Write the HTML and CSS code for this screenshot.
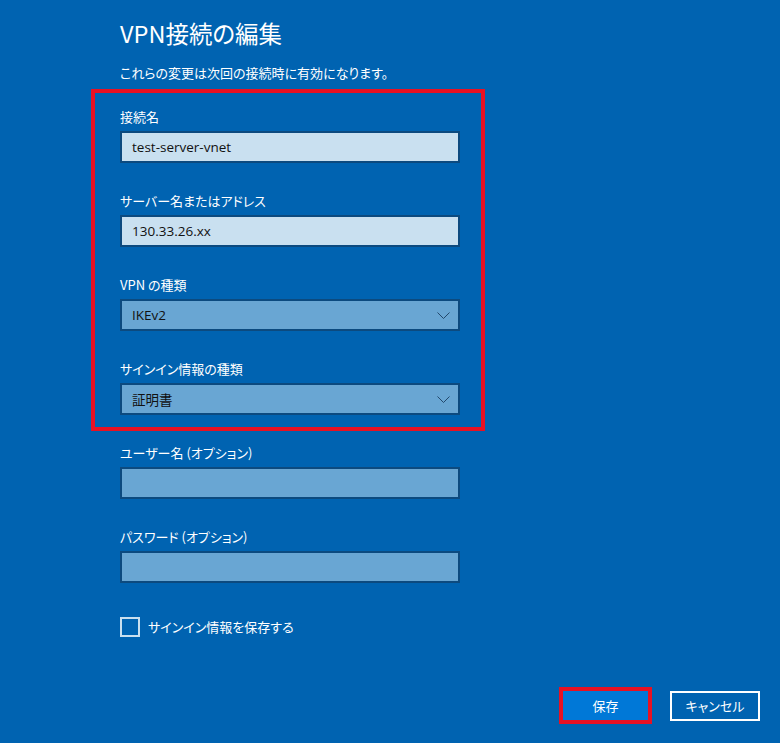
FILE: index.html
```html
<!DOCTYPE html>
<html lang="ja">
<head>
    <meta charset="UTF-8">
    <meta name="viewport" content="width=device-width, initial-scale=1.0">
    <title>VPN接続の編集</title>
    <link rel="stylesheet" href="styles.css">
</head>
<body>
    <div class="dialog">
        <!-- タイトル -->
        <h1 class="dialog-title">VPN接続の編集</h1>
        <p class="dialog-note">これらの変更は次回の接続時に有効になります。</p>

        <!-- 赤枠で囲まれた項目 -->
        <div class="highlight">
            <div class="field">
                <label class="field-label">接続名</label>
                <div class="field-box box-light">test-server-vnet</div>
            </div>
            <div class="field">
                <label class="field-label">サーバー名またはアドレス</label>
                <div class="field-box box-light">130.33.26.xx</div>
            </div>
            <div class="field">
                <label class="field-label">VPN の種類</label>
                <div class="field-box box-select">
                    <span>IKEv2</span>
                    <svg class="chevron" width="13" height="7" viewBox="0 0 13 7"><path d="M0.5 0.5 L6.5 6.5 L12.5 0.5" fill="none" stroke="#23486b" stroke-width="1"/></svg>
                </div>
            </div>
            <div class="field">
                <label class="field-label">サインイン情報の種類</label>
                <div class="field-box box-select">
                    <span>証明書</span>
                    <svg class="chevron" width="13" height="7" viewBox="0 0 13 7"><path d="M0.5 0.5 L6.5 6.5 L12.5 0.5" fill="none" stroke="#23486b" stroke-width="1"/></svg>
                </div>
            </div>
        </div>

        <!-- オプション項目 -->
        <div class="field">
            <label class="field-label">ユーザー名 (オプション)</label>
            <div class="field-box box-select"></div>
        </div>
        <div class="field">
            <label class="field-label">パスワード (オプション)</label>
            <div class="field-box box-select"></div>
        </div>

        <label class="check">
            <span class="check-box"></span>
            <span class="check-text">サインイン情報を保存する</span>
        </label>
    </div>

    <!-- ボタン -->
    <div class="buttons">
        <div class="save-mark">
            <button class="btn btn-primary">保存</button>
        </div>
        <button class="btn btn-outline">キャンセル</button>
    </div>
</body>
</html>
```

FILE: styles.css
```css
* {
    margin: 0;
    padding: 0;
    box-sizing: border-box;
}

body {
    font-family: "Noto Sans CJK JP", "Noto Sans", sans-serif;
    font-feature-settings: "palt";
    background: #0063b1;
    color: #fff;
    width: 780px;
    height: 743px;
    overflow: hidden;
    position: relative;
}

.dialog {
    padding: 17px 0 0 120px;
}

.dialog-title {
    font-size: 23.5px;
    font-weight: normal;
    line-height: 32px;
}

.dialog-note {
    font-size: 13px;
    line-height: 20px;
    margin-top: 14px;
}

/* 赤枠 */
.highlight {
    width: 394px;
    margin: 6px 0 0 -29px;
    border: 4px solid #e81123;
    padding: 14px 0 12px 25px;
}

.highlight .field + .field {
    margin-top: 28px;
}

.highlight + .field {
    margin-top: 12px;
}

.field + .field {
    margin-top: 28px;
}

.field-label {
    display: block;
    font-size: 13px;
    line-height: 20px;
    margin-bottom: 4px;
}

.field-box {
    width: 340px;
    height: 32px;
    border: 2px solid #0c4a7f;
    padding: 0 10px;
    font-family: "Open Sans", "Noto Sans CJK JP", sans-serif;
    font-size: 13.5px;
    color: #111;
    display: flex;
    align-items: center;
    justify-content: space-between;
}

.box-light {
    background: #c9e0f0;
}

.box-select {
    background: #69a6d3;
}

.chevron {
    margin-right: -2px;
}

/* チェックボックス */
.check {
    display: flex;
    align-items: center;
    margin-top: 34px;
}

.check-box {
    width: 20px;
    height: 20px;
    border: 2px solid #c9dfef;
}

.check-text {
    font-size: 13px;
    line-height: 20px;
    margin-left: 8px;
}

/* ボタン */
.buttons {
    position: absolute;
    top: 687px;
    left: 559px;
    display: flex;
    align-items: center;
}

.save-mark {
    border: 4px solid #e81123;
}

.btn {
    font-family: "Noto Sans CJK JP", sans-serif;
    font-feature-settings: "palt";
    font-size: 13px;
    color: #fff;
    height: 29px;
}

.btn-primary {
    width: 85px;
    background: #0078d7;
    border: none;
}

.btn-outline {
    width: 90px;
    height: 30px;
    margin-left: 18px;
    background: transparent;
    border: 2px solid #fff;
}
```
